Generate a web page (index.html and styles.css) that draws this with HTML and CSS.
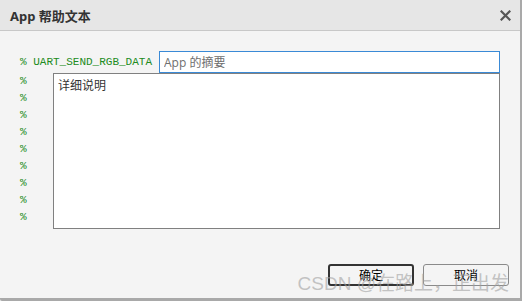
FILE: index.html
```html
<!DOCTYPE html>
<html lang="zh-CN">
    <head>
        <meta charset="UTF-8">
        <meta name="viewport" content="width=device-width, initial-scale=1.0">
        <title>App 帮助文本</title>
        <link rel="stylesheet" href="styles.css">
    </head>
    <body>
        <div class="dialog">
            <div class="titlebar">
                <span class="title">App 帮助文本</span>
                <button class="close" aria-label="关闭">
                    <svg width="11" height="11" viewBox="0 0 11 11">
                        <path d="M1.5 1.5 L9.5 9.5 M9.5 1.5 L1.5 9.5" stroke="#555" stroke-width="2.2" stroke-linecap="square"/>
                    </svg>
                </button>
            </div>

            <div class="content">
                <div class="summary-row">
                    <span class="code">% UART_SEND_RGB_DATA</span>
                    <input class="summary" type="text" placeholder="App 的摘要">
                </div>
                <div class="detail-row">
                    <div class="gutter">
                        <div>%</div><div>%</div><div>%</div>
                        <div>%</div><div>%</div><div>%</div>
                        <div>%</div><div>%</div><div>%</div>
                    </div>
                    <div class="detail">详细说明</div>
                </div>
            </div>

            <div class="actions">
                <button class="btn default">确定</button>
                <button class="btn">取消</button>
            </div>

            <span class="watermark">CSDN @在路上，正出发</span>
        </div>
    </body>
</html>
```

FILE: styles.css
```css
body {
    margin: 0;
    background: #f4f4f4;
    font-family: "Open Sans", "Noto Sans CJK SC", sans-serif;
}
.dialog {
    position: relative;
    width: 520px;
    height: 298px;
    background: #f4f4f4;
    border-right: 2px solid #a9a9a9;
    border-bottom: 3px solid #a9a9a9;
    border-bottom-left-radius: 2px;
}
.titlebar {
    height: 30px;
    background: #e6e6e6;
    border-bottom: 1px solid #c8c8c8;
    display: flex;
    align-items: center;
    justify-content: space-between;
    padding: 0 9px 0 10px;
}
.title {
    font-family: "Noto Sans", "Noto Sans CJK SC", sans-serif;
    font-size: 13px;
    font-weight: bold;
    color: #333;
}
.close {
    border: none;
    background: none;
    padding: 0;
    width: 11px;
    height: 11px;
    display: flex;
}
.content {
    padding: 20px 20px 0 20px;
}
.code,
.gutter {
    font-family: "Liberation Mono", monospace;
    font-size: 11px;
    color: #218b21;
}
.summary-row {
    display: flex;
    align-items: center;
    height: 22px;
}
.code {
    width: 139px;
    white-space: pre;
}
.summary {
    flex: 1;
    box-sizing: border-box;
    height: 22px;
    margin: 0;
    border: 1px solid #3a8ad6;
    padding: 0 4px;
    font-family: "Open Sans", "Noto Sans CJK SC", sans-serif;
    font-size: 12px;
    outline: none;
}
.summary::placeholder {
    color: #6e6e6e;
}
.detail-row {
    display: flex;
}
.gutter {
    width: 33px;
    line-height: 17px;
}
.detail {
    flex: 1;
    box-sizing: border-box;
    height: 156px;
    background: #fff;
    border: 1px solid #808080;
    padding: 4px 4px;
    font-size: 12px;
    line-height: 16px;
    color: #333;
}
.actions {
    display: flex;
    justify-content: flex-end;
    gap: 9px;
    padding: 35px 11px 0 0;
}
.btn {
    box-sizing: border-box;
    width: 86px;
    height: 22px;
    background: #f4f4f4;
    border: 1px solid #8a8a8a;
    border-radius: 3px;
    font-family: "Open Sans", "Noto Sans CJK SC", sans-serif;
    font-size: 12px;
    color: #000;
    padding: 0;
}
.btn.default {
    border: 2px solid #333;
}
.watermark {
    position: absolute;
    right: 11px;
    top: 268px;
    font-family: "Liberation Sans", "Noto Sans CJK SC", sans-serif;
    font-size: 19px;
    color: rgba(160, 160, 160, 0.6);
    pointer-events: none;
    white-space: nowrap;
}
```
